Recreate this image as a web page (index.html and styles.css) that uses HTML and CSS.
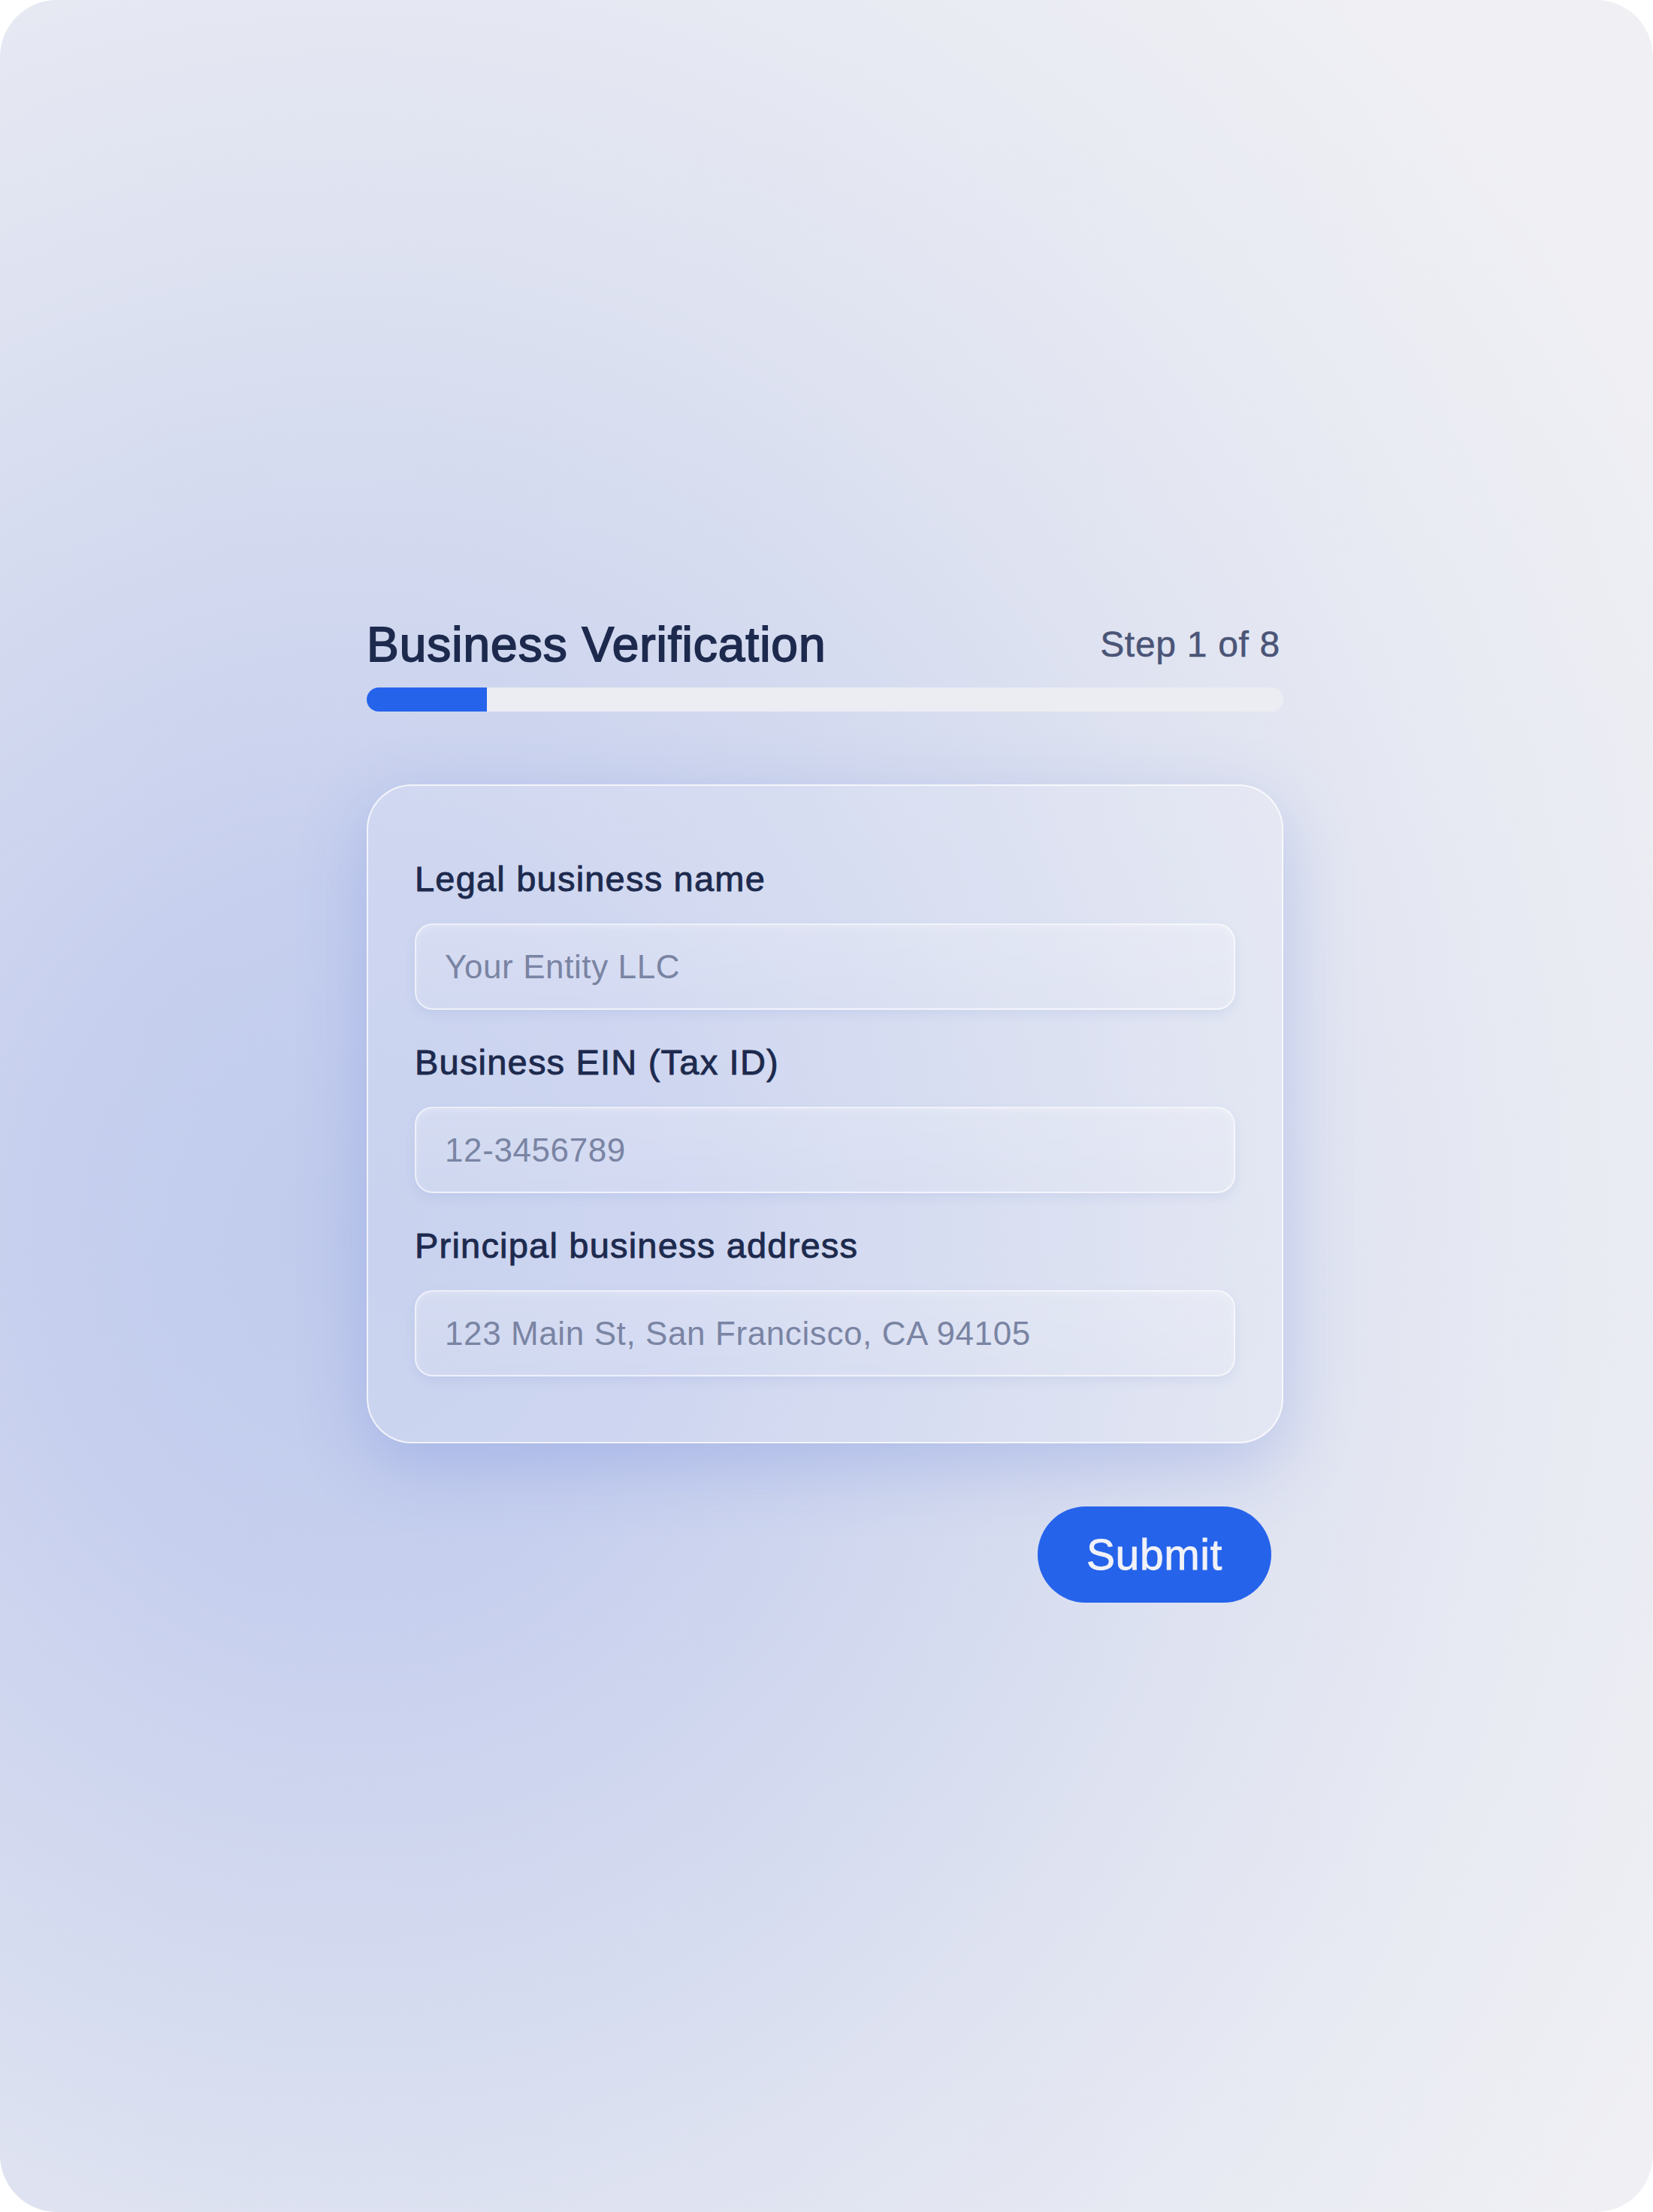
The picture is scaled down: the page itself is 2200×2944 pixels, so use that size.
FILE: index.html
```html
<!DOCTYPE html>
<html lang="en">
<head>
<meta charset="utf-8">
<title>Business Verification</title>
<link rel="stylesheet" href="styles.css">
</head>
<body>
<div class="screen">
  <main class="flow">
    <header class="head">
      <h1 class="title">Business Verification</h1>
      <span class="step">Step 1 of 8</span>
    </header>
    <div class="progress"><div class="progress-fill" style="width:13.1%"></div></div>
    <form class="card">
      <div class="field">
        <label class="label" for="f1">Legal business name</label>
        <input class="input" id="f1" type="text" placeholder="Your Entity LLC">
      </div>
      <div class="field">
        <label class="label" for="f2">Business EIN (Tax ID)</label>
        <input class="input" id="f2" type="text" placeholder="12-3456789">
      </div>
      <div class="field">
        <label class="label" for="f3">Principal business address</label>
        <input class="input" id="f3" type="text" placeholder="123 Main St, San Francisco, CA 94105">
      </div>
    </form>
    <div class="actions">
      <button class="submit" type="button">Submit</button>
    </div>
  </main>
</div>
</body>
</html>
```
FILE: styles.css
```css
html, body {
  margin: 0;
  padding: 0;
  background: #ffffff;
}

.screen {
  box-sizing: border-box;
  width: 2200px;
  height: 2944px;
  padding: 8px 4px 0 0;
  border-radius: 76px;
  overflow: hidden;
  display: flex;
  align-items: center;
  justify-content: center;
  font-family: "Liberation Sans", Arial, sans-serif;
  background:
    radial-gradient(ellipse 2050px 2300px at 470px 1650px,
      #c0cbec 0%,
      #c6cfee 20%,
      #d2d9ef 40%,
      #dfe3f1 60%,
      #e9ebf3 80%,
      #f0f0f4 100%);
  background-color: #f0f0f4;
}

.flow {
  width: 1220px;
  display: flex;
  flex-direction: column;
}

.head {
  height: 78px;
  display: flex;
  align-items: center;
  justify-content: space-between;
}

.title {
  margin: 0;
  font-size: 64px;
  line-height: 78px;
  font-weight: 400;
  letter-spacing: 1px;
  color: #1d2a4e;
  -webkit-text-stroke: 1.8px #1d2a4e;
}

.step {
  margin-right: 4px;
  font-size: 48px;
  line-height: 58px;
  letter-spacing: 0.7px;
  color: #4b5577;
  -webkit-text-stroke: 0.5px #4b5577;
}

.progress {
  margin-top: 18px;
  height: 32px;
  border-radius: 16px;
  background: #ecedf3;
  overflow: hidden;
}

.progress-fill {
  height: 100%;
  background: #2563eb;
}

.card {
  margin: 97px 0 0;
  box-sizing: border-box;
  padding: 96px 62px 87px;
  border: 2px solid rgba(255, 255, 255, 0.72);
  border-radius: 60px;
  background: rgba(255, 255, 255, 0.14);
  box-shadow: 0 28px 90px rgba(90, 120, 215, 0.28);
  display: flex;
  flex-direction: column;
  gap: 42px;
}

.field {
  display: flex;
  flex-direction: column;
  gap: 32px;
}

.label {
  display: block;
  font-size: 47px;
  line-height: 55px;
  letter-spacing: 1.2px;
  color: #1d2a4e;
  -webkit-text-stroke: 0.9px #1d2a4e;
}

.input {
  box-sizing: border-box;
  width: 100%;
  height: 115px;
  margin: 0;
  padding: 0 38px;
  border: 2px solid rgba(255, 255, 255, 0.6);
  border-radius: 24px;
  background: linear-gradient(180deg, rgba(255, 255, 255, 0.2), rgba(255, 255, 255, 0.1));
  box-shadow: inset 0 3px 8px rgba(255, 255, 255, 0.22), 0 6px 14px rgba(90, 120, 210, 0.1);
  font-family: "Liberation Sans", Arial, sans-serif;
  font-size: 44px;
  letter-spacing: 0.6px;
  color: #1d2a4e;
  outline: none;
}

.input::placeholder {
  color: #7a84a3;
  opacity: 1;
}

.actions {
  margin-top: 84px;
  padding-right: 16px;
  display: flex;
  justify-content: flex-end;
}

.submit {
  height: 128px;
  padding: 0 65px;
  border: 0;
  border-radius: 64px;
  background: #2563eb;
  color: #f1f2f8;
  font-family: "Liberation Sans", Arial, sans-serif;
  font-size: 57px;
  letter-spacing: 0.6px;
  -webkit-text-stroke: 0.8px #f1f2f8;
  cursor: pointer;
}
```
